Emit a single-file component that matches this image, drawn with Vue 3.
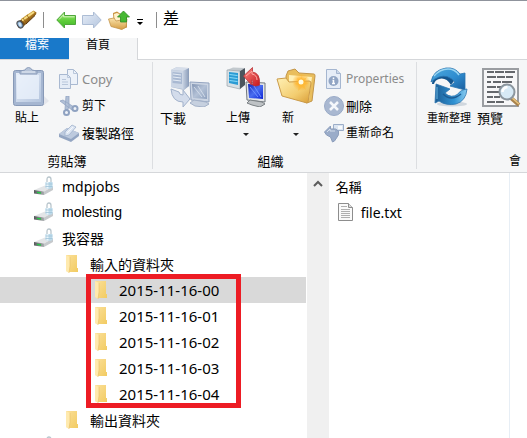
<script setup>
import { ref } from 'vue'

const topRows = [
  { label: 'mdpjobs', kind: 'drive', level: 0 },
  { label: 'molesting', kind: 'drive', level: 0, arial: true },
  { label: '我容器', kind: 'drive', level: 0 },
  { label: '輸入的資料夾', kind: 'folder', level: 1 }
]
const dateRows = ['2015-11-16-00', '2015-11-16-01', '2015-11-16-02', '2015-11-16-03', '2015-11-16-04']
const bottomRows = [
  { label: '輸出資料夾', kind: 'folder', level: 1 },
  { label: '', kind: 'drive', level: 0 }
]
const selected = ref('2015-11-16-00')
</script>

<template>
  <div class="app">
    <svg class="defs" width="0" height="0" aria-hidden="true">
      <defs>
        <linearGradient id="gGreen" x1="0" y1="0" x2="0" y2="1"><stop offset="0" stop-color="#b4ef8c" /><stop offset=".5" stop-color="#62cf3c" /><stop offset="1" stop-color="#3fb528" /></linearGradient>
        <linearGradient id="gPale" x1="0" y1="0" x2="1" y2="1"><stop offset="0" stop-color="#e6edf7" /><stop offset="1" stop-color="#b4c5de" /></linearGradient>
        <linearGradient id="gSlate" x1="0" y1="0" x2="1" y2="0"><stop offset="0" stop-color="#c5d0e1" /><stop offset="1" stop-color="#899bb8" /></linearGradient>
        <linearGradient id="gSlateScreen" x1="0" y1="0" x2="1" y2="1"><stop offset="0" stop-color="#8496b4" /><stop offset=".5" stop-color="#b3c1d6" /><stop offset="1" stop-color="#8fa1be" /></linearGradient>
        <linearGradient id="gTan" x1="0" y1="0" x2="0" y2="1"><stop offset="0" stop-color="#fae4ad" /><stop offset="1" stop-color="#d59d43" /></linearGradient>
        <linearGradient id="gGold" x1="0" y1="0" x2="1" y2="1"><stop offset="0" stop-color="#fff0b4" /><stop offset=".6" stop-color="#f3cd70" /><stop offset="1" stop-color="#d99d36" /></linearGradient>
        <linearGradient id="gBrass" x1="0" y1="0" x2="1" y2="1"><stop offset="0" stop-color="#f2d469" /><stop offset=".5" stop-color="#b07a20" /><stop offset="1" stop-color="#452706" /></linearGradient>
        <linearGradient id="gScreen" x1="0" y1="0" x2="1" y2="1"><stop offset="0" stop-color="#1425ba" /><stop offset=".5" stop-color="#496df0" /><stop offset="1" stop-color="#0b22d6" /></linearGradient>
        <linearGradient id="gRed" x1="0" y1="0" x2="1" y2="1"><stop offset="0" stop-color="#ff8b83" /><stop offset="1" stop-color="#c5151c" /></linearGradient>
        <linearGradient id="gBlue" x1="0" y1="0" x2="1" y2="1"><stop offset="0" stop-color="#4da8dc" /><stop offset=".55" stop-color="#2f8dd0" /><stop offset="1" stop-color="#1a5e9e" /></linearGradient>
        <linearGradient id="gBlueTail" x1="0" y1="0" x2="1" y2="0"><stop offset="0" stop-color="#1c5e96" /><stop offset=".6" stop-color="#2f92d3" /><stop offset="1" stop-color="#8ccdf0" /></linearGradient>
        <linearGradient id="gFolder" x1="0" y1="0" x2="1" y2="1"><stop offset="0" stop-color="#fbe09a" /><stop offset="1" stop-color="#f2cb61" /></linearGradient>
        <linearGradient id="gMetal" x1="0" y1="0" x2="1" y2="0"><stop offset="0" stop-color="#54595a" /><stop offset="1" stop-color="#a9adaf" /></linearGradient>
        <radialGradient id="gSpark"><stop offset="0" stop-color="#fffbd0" /><stop offset=".25" stop-color="#ffb22c" /><stop offset="1" stop-color="#ffad25" stop-opacity="0" /></radialGradient>
        <symbol id="drive" viewBox="0 0 20 20">
          <path d="M0 14 11 9.500l8 1-9 5z" fill="#e3e5e7" />
          <path d="M0 14l10 1.500V19L0 17.500z" fill="url(#gMetal)" />
          <path d="m10 15.500 9-5V14l-9 5z" fill="#c6c9cc" />
          <path d="M3 15.700l4 .6v1.400l-4-.6z" fill="#25c947" />
          <path d="M13 6V3.500Q13 1 15 1t2 2.500V6" fill="none" stroke="#b9c6cd" stroke-width="1.300" />
          <path d="M11.500 6h7v6q-3.500 2-7 0z" fill="#bcdaea" />
          <path d="M12.500 6h2v6.500h-2z" fill="#eaf5fa" />
          <path d="M11.500 8h7M11.500 10.500h7" stroke="#9fc3d8" stroke-width=".8" />
        </symbol>
        <symbol id="folder" viewBox="0 0 20 20">
          <path d="M4 1h11v13h1v4H7L4 17z" fill="url(#gFolder)" />
          <path d="M4 1l4 2v9l-1 7-3-2z" fill="#ffeaae" />
          <path d="M8 3v9l-1 7" fill="none" stroke="#e7c065" stroke-width=".6" />
        </symbol>
      </defs>
    </svg>

    <div class="topstrip"></div>
    <header class="titlebar">
      <svg class="scope" width="22" height="20" viewBox="0 0 22 20" aria-hidden="true">
        <path d="m2 12 5-4 4 5-4 4-4 1-2-3z" fill="#765019" />
        <path d="m5 9 7-5 3.500 4.500-6 6z" fill="url(#gBrass)" /><path d="m11.500 4.500 6-4 3 2-.5 2-5.500 5z" fill="url(#gBrass)" />
        <path d="m6 10.500 12-8.500" stroke="#f6dc83" stroke-width="2" /><path d="m10 14 9-8.500" stroke="#5b370f" />
        <path d="m11 5 3 5M7 8l3.500 5" stroke="#8b5c1a" stroke-width=".8" />
        <ellipse cx="4" cy="14.500" rx="2.700" ry="3.700" transform="rotate(-30 4 14.500)" fill="#7ba4cb" stroke="#4a4a4c" /><ellipse cx="4" cy="14.500" rx="1.300" ry="2.200" transform="rotate(-30 4 14.500)" fill="#d6e8f6" />
      </svg>
      <span class="rule"></span>
      <button class="tool back" aria-label="Back">
        <svg width="20" height="18" viewBox="0 0 20 18"><path d="M.8 9 8.500 1v3.500h11v9h-11V17z" fill="url(#gGreen)" stroke="#4fa63c" /><path d="M3 8.500 7.500 3.800v2h11" fill="none" stroke="#d0f5b8" /></svg>
      </button>
      <button class="tool" aria-label="Forward">
        <svg width="20" height="18" viewBox="0 0 20 18"><path d="M19.200 9 11.500 1v3.500H.5v9h11V17z" fill="url(#gPale)" stroke="#adbdd5" /></svg>
      </button>
      <button class="tool" aria-label="Up">
        <svg width="22" height="20" viewBox="0 0 22 20">
          <path d="m5 3 4-1.500 3 2 7 2v12l-6 2L6 16z" fill="#c8923e" /><path d="m6 4 3-1 9 4v8H7z" fill="#fff1cc" />
          <path d="M.5 9 6 8l2 3 11-2-1 8-4 2.500-11-3z" fill="url(#gTan)" stroke="#c4954c" stroke-width=".8" />
          <path d="m15.500 1 6 6h-3v5h-6V7h-3z" fill="#46b832" stroke="#318a24" stroke-width=".8" />
        </svg>
      </button>
      <button class="tool more" aria-label="More"><svg width="8" height="6" viewBox="0 0 8 6"><path d="M1 0h6v1H1zM1 3h6L4 6z" /></svg></button>
      <span class="rule"></span>
      <span class="title">差</span>
    </header>

    <nav class="tabs">
      <button class="tab file">檔案</button>
      <button class="tab home">首頁</button>
      <span class="tabfill"></span>
    </nav>

    <section class="ribbon">
      <div class="group clipboard">
        <div class="tools">
          <button class="big paste">
            <svg width="40" height="40" viewBox="0 0 40 40" aria-hidden="true">
              <path d="m34 28 6 6-6 5H12z" fill="#d8dce4" opacity=".6" />
              <rect x="4.500" y="3.500" width="30" height="35" rx="2" fill="#a5b6d1" stroke="#8799b7" />
              <path d="M7 6h25v29H7z" fill="url(#gPale)" /><path d="M8 8h22v24H8z" fill="#eaf1fb" opacity=".8" />
              <path d="M11 7V4l5-1q1-2.500 3.500-2.500T23 3l5 1v3z" fill="#b5c3d8" stroke="#8a9cba" /><path d="M13 5h13" stroke="#e7edf6" />
            </svg>
            <span class="s12">貼上</span>
          </button>
          <div class="small">
            <button class="row muted copy">
              <svg width="20" height="20" viewBox="0 0 20 20" aria-hidden="true"><path d="M8.500.500h6l4 4v11h-10z" fill="#edf2f9" stroke="#a9b9d1" /><path d="M.5 5.500h8l3 3v11H.5z" fill="#e5ecf6" stroke="#a9b9d1" /><path d="M8.500 5.500v3h3M3 10.500h4M3 13h6M3 15.500h6M14.500.500v4h4" fill="none" stroke="#b9c7db" /></svg>
              <span class="s13">Copy</span>
            </button>
            <button class="row">
              <svg width="20" height="20" viewBox="0 0 20 20" aria-hidden="true"><path d="m1 5 3-1 11 7-2 3zM7 0h3v11l-2 4-2-2z" fill="#b0bfd6" stroke="#94a6c3" stroke-width=".8" /><circle cx="16" cy="12.500" r="2.500" fill="#eef2f8" stroke="#8fa2c1" stroke-width="2" /><circle cx="7.500" cy="16.500" r="2.500" fill="#eef2f8" stroke="#8fa2c1" stroke-width="2" /></svg>
              <span class="s12">剪下</span>
            </button>
            <button class="row">
              <svg width="20" height="20" viewBox="0 0 20 20" aria-hidden="true"><path d="m0 11 8-6 12 5v3l-8 6L0 14z" fill="#93a5c2" /><path d="m0 11 8-6 12 5-8 6z" fill="#bdcade" /><path d="m6 9 7-7 4 2-7 8-4 1z" fill="#dce5f2" stroke="#a0b1cc" stroke-width=".8" /><path d="m8 10 6-6" stroke="#f5f8fc" /></svg>
              <span class="s13">複製路徑</span>
            </button>
          </div>
        </div>
        <div class="caption">剪貼簿</div>
      </div>

      <div class="group organize">
        <div class="tools">
          <button class="big shifted download">
            <svg width="40" height="40" viewBox="0 0 40 40" aria-hidden="true">
              <path d="M1 3 6 .500 19 1v18l-5 4L1 20z" fill="#a7b6cd" /><path d="m1 3 12 1v18L1 20z" fill="#ccd6e5" /><path d="M2.500 5 12 6v11l-9.500-1z" fill="#a9b9d2" />
              <path d="m3 7 8 1m-8 2 8 1m-8 2 8 1" stroke="#e6edf6" /><path d="m13 4 6-3v18l-6 4z" fill="url(#gSlate)" /><path d="M1 3 6 .500 19 1l-6 3z" fill="#d6deea" />
              <path d="M1 22l8 3q0 3 4 3v-5l7 9-7 8v-5Q2 35 1 22z" fill="#d3dceb" stroke="#a2b2cb" />
              <path d="m20 15 19 1v19l-18-2z" fill="#ccd5e3" stroke="#93a4c0" /><path d="m22 17 15 1v14l-14-1z" fill="url(#gSlateScreen)" /><path d="m24 20 8 10m-4-11 7 11" stroke="#d1dbe9" /><path d="m24 33-4 3 5 3 9 1 5-3-3-2z" fill="#c6d0df" stroke="#a3b1c8" />
            </svg>
            <span class="s13">下載</span>
          </button>
          <button class="big start upload">
            <svg width="40" height="40" viewBox="0 0 40 40" aria-hidden="true">
              <path d="M1 3 7 .500 19 1l-5 3z" fill="#c2c9ce" /><path d="m1 3 13 1v18L1 19z" fill="#d8e0e5" stroke="#8d979e" stroke-width=".6" /><path d="m3 5 9 1v12l-9-2z" fill="#2b9bd4" /><path d="m3.500 7.500 8 1m-8 2 8 1m-8 2 8 1" stroke="#8bdcf8" /><path d="m14 4 5-3v17l-5 4z" fill="#4c555d" />
              <path d="m20 15 19 1v19l-18-2z" fill="#e4e6e8" stroke="#70777d" /><path d="m22 17 15 1v14l-14-1z" fill="url(#gScreen)" /><path d="m24 20 8 10m-4-11 7 11" stroke="#6e91ff" /><path d="m24 33-3 3 5 2 8 2 5-3-3-2z" fill="#bec2c5" stroke="#7a8084" />
              <path d="m17.500 9 9-8.500V5q8 1 7 13-4 2-7 0 1-5-1-5v5z" fill="url(#gRed)" stroke="#b93438" stroke-width=".8" />
              <path d="m20 9 6-5v3q5 1 5 6" fill="none" stroke="#ffaaa4" />
            </svg>
            <span class="s12">上傳</span>
            <i class="caret"></i>
          </button>
          <button class="big start new">
            <svg width="40" height="40" viewBox="0 0 40 40" aria-hidden="true">
              <path d="m10 9 2-5 7-2 4 4 15 1q1 0 1 2l-3 25-5 2-20-9z" fill="#e9be5d" stroke="#c3964a" /><path d="m13 8 23 2-3 22-20-7z" fill="#fff0b6" />
              <path d="m1 12 9-1 3 4 20-1q2 0 2 2l-3 19-1 1-25-7z" fill="url(#gGold)" stroke="#cb9b4a" />
              <circle cx="25" cy="15" r="9" fill="url(#gSpark)" /><path d="m25 7 1 6 5-3-3 5 5 1-5 2 2 5-4-3-4 4 1-6-5-1 5-2-2-4 4 2z" fill="#ffb932" opacity=".6" /><circle cx="25" cy="15" r="2.500" fill="#fffce2" />
            </svg>
            <span class="s12 inset">新</span>
            <i class="caret"></i>
          </button>
          <div class="small">
            <button class="row muted">
              <svg width="20" height="20" viewBox="0 0 20 20" aria-hidden="true"><path d="M2.500.500h10l4 4v15h-14z" fill="#e6edf7" stroke="#a5b6d0" /><path d="M12.500.500v4h4" fill="#cdd9e9" stroke="#a5b6d0" /><circle cx="9.500" cy="12" r="5" fill="#91a5c4" /><path d="M9.500 8.500V10m-1 1.500h1v3m-1.500 0h3" stroke="#fff" stroke-width="1.500" fill="none" /></svg>
              <span class="s12">Properties</span>
            </button>
            <button class="row">
              <svg width="20" height="20" viewBox="0 0 20 20" aria-hidden="true"><circle cx="10" cy="10" r="9.500" fill="#a9b8d1" stroke="#9aabc7" /><path d="m6 6 8 8m0-8-8 8" stroke="#f4f7fb" stroke-width="2.500" /></svg>
              <span class="s13">刪除</span>
            </button>
            <button class="row">
              <svg width="20" height="20" viewBox="0 0 20 20" aria-hidden="true"><path d="M9.500 1.500h10v6h-10z" fill="#dce5f1" stroke="#9badc8" /><path d="M14 3h4v3h-4z" fill="#f8fafc" /><path d="m.5 9 6-6v3q6-1 8 2 1 4-2 7l-2 3-2 1-2-5-4-2z" fill="#9aacc9" stroke="#8b9dbb" /><path d="m3 9 3-3v2h5" fill="none" stroke="#d4deeb" /></svg>
              <span class="s12">重新命名</span>
            </button>
          </div>
        </div>
        <div class="caption">組織</div>
      </div>

      <div class="group view">
        <div class="tools">
          <button class="big">
            <svg width="40" height="40" viewBox="0 0 40 40" aria-hidden="true">
              <ellipse cx="23" cy="37" rx="15" ry="2.500" fill="#b7c3cd" opacity=".6" />
              <path d="M3 17Q3 8 10 8q12-1 15 6l-4 5 1-1q-5-8-12-6-4 1-5 5z" fill="#14568f" />
              <path d="M2 15Q4 3 17 1q9-1 14 6l5-1v17l-15-4 5-4Q19 7 10 10q-5 2-8 5z" fill="url(#gBlue)" stroke="#2a74ae" stroke-width=".8" />
              <path d="M5 9Q11 2 19 2q7 0 11 6" fill="none" stroke="#9ad5f2" stroke-width="1.500" />
              <path d="M38 22q-1 12-11 15-10 2-17-3l-4 2 1-19 14 5-5 4q6 6 13 1 2-4 9-5z" fill="url(#gBlueTail)" stroke="#2a74ae" stroke-width=".8" />
              <path d="M8 20v12" stroke="#67b4e0" /><path d="M14 27q8 8 18 0" fill="none" stroke="#1c5c95" stroke-width="1.500" />
            </svg>
            <span class="s11">重新整理</span>
          </button>
          <button class="big shifted preview">
            <svg width="40" height="40" viewBox="0 0 40 40" aria-hidden="true">
              <path d="M2 2h35v37H2z" fill="#f7f7f8" stroke="#9a9da1" stroke-width="2" /><path d="M6 5h7m1 0h9m1 0h10M6 10h9m1 0h8m1 0h7M6 15h4m2 0h8m1 0h10M6 20h9m1 0h7M6 25h12M6 30h6m1 0h6M6 35h8m1 0h8" stroke="#65686c" stroke-width="2" />
              <path d="m30 31 8 7" stroke="#a8824c" stroke-width="4" /><path d="m30 30 8 7" stroke="#e8c47d" stroke-width="1.500" />
              <circle cx="26" cy="25" r="7.500" fill="#d7eaf6" stroke="#8c969e" stroke-width="2" /><path d="M21.500 25q0-4 5-5" fill="none" stroke="#fff" stroke-width="2.500" />
            </svg>
            <span class="s13">預覽</span>
          </button>
        </div>
        <div class="caption">會</div>
      </div>
    </section>

    <main class="body">
      <div class="tree">
        <button v-for="r in topRows" :key="r.label" class="node" :class="['level' + r.level, { arial: r.arial }]">
          <svg width="20" height="20" aria-hidden="true"><use :href="'#' + r.kind" /></svg><span>{{ r.label }}</span>
        </button>
        <div class="dates">
          <button v-for="d in dateRows" :key="d" class="node level2" :class="{ selected: selected === d }" @click="selected = d">
            <svg width="20" height="20" aria-hidden="true"><use href="#folder" /></svg><span>{{ d }}</span>
          </button>
          <div class="outline"></div>
        </div>
        <button v-for="r in bottomRows" :key="r.label" class="node" :class="'level' + r.level">
          <svg width="20" height="20" aria-hidden="true"><use :href="'#' + r.kind" /></svg><span>{{ r.label }}</span>
        </button>
      </div>
      <div class="scroll">
        <button aria-label="Scroll up"><svg width="10" height="8" viewBox="0 0 10 8"><path d="m1 6 4-4 4 4" fill="none" stroke="#5c5c5c" stroke-width="2" /></svg></button>
      </div>
      <div class="files">
        <table>
          <thead><tr><th>名稱</th></tr></thead>
          <tbody><tr><td><a href="#file" class="fileitem">
            <svg width="15" height="18" viewBox="0 0 15 18" aria-hidden="true"><path d="M.5.500h10l4 4v13H.5z" fill="#fafafa" stroke="#8d8d8d" /><path d="M10.500.500v4h4" fill="#ddd" stroke="#8d8d8d" /><path d="M3 3.500h6M3 6.500h9M3 8.500h9M3 10.500h9M3 12.500h9M3 14.500h9" stroke="#b0b0b0" /></svg>
            <span>file.txt</span></a></td></tr></tbody>
        </table>
        <div class="rest"></div>
      </div>
    </main>
  </div>
</template>

<style>
body { margin: 0; background: #fff; }
</style>

<style scoped>
.app { display: flex; flex-direction: column; height: 100vh; overflow: hidden; font-family: "Noto Sans", "Noto Sans CJK TC", sans-serif; font-size: 14px; color: #000; background: #fff; }
.defs { position: absolute; }
button { display: flex; margin: 0; padding: 0; border: 0; background: none; font: inherit; color: inherit; text-align: left; white-space: nowrap; }
svg { display: block; flex: none; }
.s11 { font-size: 11px; }
.s12 { font-size: 12px; }
.s13 { font-size: 13px; }

.topstrip { flex: none; height: 1px; background: #8f939c; }
.titlebar { flex: none; display: flex; align-items: center; height: 37px; padding-left: 16px; }
.rule { width: 1px; height: 16px; margin-left: 5px; background: #8d8d8d; }
.tool { margin-left: 6px; }
.tool.back { margin-left: 12px; }
.tool.more { margin: 4px 7px 0 6px; }
.title { margin-left: 6px; font-size: 16px; line-height: 20px; padding-bottom: 4px; }

.tabs { flex: none; display: flex; height: 22px; }
.tab { box-sizing: border-box; width: 69px; padding-left: 25px; font-size: 12px; line-height: 14px; align-items: flex-start; }
.tab.file { background: #1979ca; color: #fff; border-bottom: 1px solid #d5d7da; }
.tab.home { padding-left: 17px; background: #f5f6f7; border-right: 1px solid #d5d7da; }
.tabfill { flex: 1; border-bottom: 1px solid #d5d7da; }

.ribbon { flex: none; display: flex; height: 112px; background: #f5f6f7; border-bottom: 1px solid #d5d7da; overflow: hidden; }
.group { flex: none; box-sizing: border-box; display: flex; flex-direction: column; justify-content: space-between; margin: 2px 0 3px; padding-top: 3px; border-right: 1px solid #dcdee1; }
.clipboard { width: 153px; }
.organize { width: 264px; }
.view { flex: 1; border-right: 0; }
.tools { display: flex; align-items: flex-start; }
.clipboard .tools { padding-left: 9px; }
.organize .tools { padding-left: 7px; }
.view .tools { padding-left: 10px; gap: 6px; }
.big { flex-direction: column; align-items: center; line-height: 16px; padding-top: 2px; gap: 3px; }
.paste { margin-right: 10px; }
.paste span { padding-right: 4px; }
.start { align-items: flex-start; }
.shifted { align-items: flex-end; }
.shifted span { align-self: flex-start; }
.download { width: 50px; margin-right: 16px; }
.preview { width: 44px; }
.new { margin: 0 8px 0 10px; }
.inset { padding-left: 6px; }
.caret { align-self: center; margin-top: 4px; border: solid transparent; border-width: 3px 3px 0; border-top-color: #222; }
.small { display: flex; flex-direction: column; }
.row { align-items: center; height: 27px; gap: 2px; line-height: 16px; }
.clipboard .row { gap: 3px; }
.muted { color: #8b8b8b; }
.caption { font-size: 13px; line-height: 16px; text-align: center; }
.clipboard .caption { padding-right: 18px; }
.organize .caption { padding-right: 28px; }
.view .caption { text-align: right; padding-right: 6px; font-size: 12px; }

.body { flex: 1; min-height: 0; display: flex; overflow: hidden; }
.tree { flex: 0 0 58%; overflow: hidden; }
.node { box-sizing: border-box; width: 100%; height: 26px; align-items: center; gap: 8px; }
.level0 { padding-left: 34px; }
.level1 { padding-left: 62px; }
.level2 { padding-left: 91px; font-size: 15px; }
.arial { font-family: "Liberation Sans", sans-serif; }
.selected { background: #d9d9d9; }
.dates { position: relative; }
.outline { position: absolute; top: -3px; bottom: -1px; left: 86px; width: 145px; border: 5px solid #ed1c24; pointer-events: none; }
.scroll { flex: none; width: 22px; margin-left: 1px; background: #f0f0f0; }
.scroll button { width: 100%; height: 22px; justify-content: center; align-items: center; }
.files { flex: 1; min-width: 0; display: grid; grid-template-columns: minmax(0, 1fr) 18px; }
table { width: 100%; align-self: start; border-collapse: collapse; }
th { height: 26px; padding: 0 0 0 7px; font-size: 13px; font-weight: 400; text-align: left; }
td { height: 26px; padding: 0 0 0 9px; }
.fileitem { display: flex; align-items: center; gap: 8px; color: inherit; text-decoration: none; }
.rest { border-left: 1px solid #e7eef5; }
</style>
